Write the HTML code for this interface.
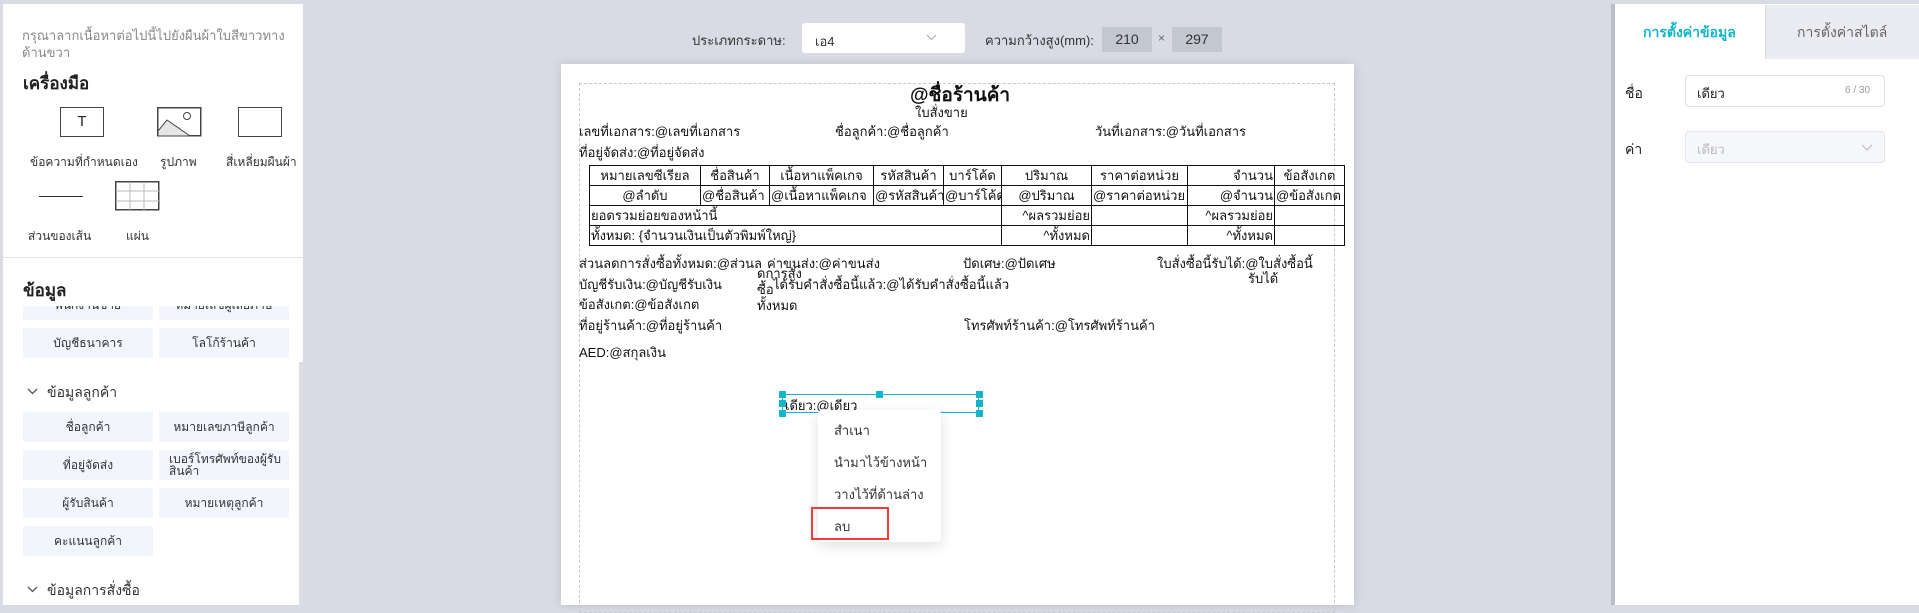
<!DOCTYPE html>
<html><head><meta charset="utf-8"><style>
*{margin:0;padding:0;box-sizing:border-box}
body{width:1919px;height:605px;overflow:hidden;background:#d8dbe3;font-family:"Liberation Sans",sans-serif;position:relative;color:#222}
.a{position:absolute;white-space:nowrap}
#left{position:absolute;left:3px;top:4px;width:300px;height:601px;background:#fff}
.btn{position:absolute;width:130px;height:30px;background:#f2f5fc;font-size:12px;color:#333;display:flex;align-items:center;justify-content:center;text-align:center;line-height:12px}
.tl{font-size:12px;color:#333}
.doc{font-size:13px;color:#111}
table{border-collapse:collapse;position:absolute;left:589px;top:165px;width:755px;font-size:13px;table-layout:fixed}
td{border:1.5px solid #111;height:20px;padding:0 1px;white-space:nowrap;overflow:hidden;line-height:17px}
.h{position:absolute;width:7px;height:7px;background:#13b5c8}
</style></head><body>
<div id="left">
 <div class="a" style="left:19px;top:23px;font-size:13px;color:#888;line-height:17px;white-space:normal;width:285px">กรุณาลากเนื้อหาต่อไปนี้ไปยังผืนผ้าใบสีขาวทางด้านขวา</div>
 <div class="a" style="left:20px;top:66px;font-size:17px;font-weight:bold;color:#222">เครื่องมือ</div>
 <div class="a" style="left:57px;top:103px;width:44px;height:30px;border:1.5px solid #444;font-size:15px;text-align:center;line-height:27px">T</div>
 <svg class="a" style="left:154px;top:103px" width="45" height="30"><rect x="0.75" y="0.75" width="43" height="28" fill="#fff" stroke="#444" stroke-width="1.5"/><path d="M1 24 L10 13 L33 29 L1 29Z" fill="#e6e6e6" stroke="#444" stroke-width="1"/><circle cx="30" cy="9" r="3.5" fill="none" stroke="#444"/></svg>
 <div class="a" style="left:235px;top:103px;width:44px;height:30px;border:1.5px solid #444"></div>
 <div class="a tl" style="left:27px;top:149px">ข้อความที่กำหนดเอง</div>
 <div class="a tl" style="left:157px;top:149px">รูปภาพ</div>
 <div class="a tl" style="left:223px;top:149px">สี่เหลี่ยมผืนผ้า</div>
 <div class="a" style="left:36px;top:192px;width:44px;border-top:1.5px solid #333"></div>
 <svg class="a" style="left:112px;top:177px" width="45" height="30"><rect x="0.75" y="0.75" width="43" height="28" fill="#fff" stroke="#444" stroke-width="1.5"/><path d="M15 1V29M29 1V29M1 10H44M1 20H44" stroke="#bbb"/></svg>
 <div class="a tl" style="left:25px;top:223px">ส่วนของเส้น</div>
 <div class="a tl" style="left:123px;top:223px">แผ่น</div>
 <div class="a" style="left:0;top:253px;width:300px;border-top:1px solid #e2e2e2"></div>
 <div class="a" style="left:20px;top:273px;font-size:17px;font-weight:bold">ข้อมูล</div>
 <div style="position:absolute;left:0;top:302px;width:300px;height:299px;overflow:hidden">
  <div class="btn" style="left:20px;top:-16px">พนักงานขาย</div>
  <div class="btn" style="left:156px;top:-16px">หมายเลขผู้เสียภาษี</div>
  <div class="btn" style="left:20px;top:22px">บัญชีธนาคาร</div>
  <div class="btn" style="left:156px;top:22px">โลโก้ร้านค้า</div>
  <svg class="a" style="left:24px;top:82px" width="11" height="7"><path d="M1 1L5.5 5.5L10 1" fill="none" stroke="#555" stroke-width="1.3"/></svg>
  <div class="a" style="left:44px;top:76px;font-size:14px;color:#333">ข้อมูลลูกค้า</div>
  <div class="btn" style="left:20px;top:106px">ชื่อลูกค้า</div>
  <div class="btn" style="left:156px;top:106px">หมายเลขภาษีลูกค้า</div>
  <div class="btn" style="left:20px;top:144px">ที่อยู่จัดส่ง</div>
  <div class="btn" style="left:156px;top:144px;justify-content:flex-start;padding-left:10px;text-align:left">เบอร์โทรศัพท์ของผู้รับสินค้า</div>
  <div class="btn" style="left:20px;top:182px">ผู้รับสินค้า</div>
  <div class="btn" style="left:156px;top:182px">หมายเหตุลูกค้า</div>
  <div class="btn" style="left:20px;top:220px">คะแนนลูกค้า</div>
  <svg class="a" style="left:24px;top:280px" width="11" height="7"><path d="M1 1L5.5 5.5L10 1" fill="none" stroke="#555" stroke-width="1.3"/></svg>
  <div class="a" style="left:44px;top:274px;font-size:14px;color:#333">ข้อมูลการสั่งซื้อ</div>
  <div class="a" style="left:296px;top:56px;width:4px;height:243px;background:#dcdde2"></div>
 </div>
</div>
<div class="a" style="left:0;top:0;width:1919px;height:4px;background:#d8dbe3"></div>
<!-- toolbar -->
<div class="a" style="left:692px;top:30px;font-size:13px;color:#333">ประเภทกระดาษ:</div>
<div class="a" style="left:802px;top:23px;width:163px;height:30px;background:#fff;border-radius:3px"></div>
<div class="a" style="left:815px;top:31px;font-size:13px;color:#333">เอ4</div>
<svg class="a" style="left:926px;top:34px" width="11" height="7"><path d="M1 1L5.5 5.5L10 1" fill="none" stroke="#aaa" stroke-width="1"/></svg>
<div class="a" style="left:985px;top:30px;font-size:13px;color:#333">ความกว้างสูง(mm):</div>
<div class="a" style="left:1102px;top:27px;width:50px;height:25px;background:#c2c7d0;font-size:14px;text-align:center;line-height:25px;color:#333">210</div>
<div class="a" style="left:1158px;top:31px;font-size:12px;color:#666">×</div>
<div class="a" style="left:1172px;top:27px;width:50px;height:25px;background:#c2c7d0;font-size:14px;text-align:center;line-height:25px;color:#333">297</div>
<!-- page -->
<div class="a" style="left:561px;top:64px;width:793px;height:541px;background:#fff;box-shadow:0 0 10px rgba(0,0,0,.12)"></div>
<div class="a" style="left:579px;top:83px;width:756px;height:530px;border:1px dashed #c8c8c8"></div>
<div class="doc">
<div class="a" style="left:910px;top:80px;font-size:19px;font-weight:bold">@ชื่อร้านค้า</div>
<div class="a" style="left:915px;top:102px">ใบสั่งขาย</div>
<div class="a" style="left:579px;top:121px">เลขที่เอกสาร:@เลขที่เอกสาร</div>
<div class="a" style="left:835px;top:121px">ชื่อลูกค้า:@ชื่อลูกค้า</div>
<div class="a" style="left:1095px;top:121px">วันที่เอกสาร:@วันที่เอกสาร</div>
<div class="a" style="left:579px;top:142px">ที่อยู่จัดส่ง:@ที่อยู่จัดส่ง</div>
<table>
<colgroup><col style="width:111px"><col style="width:69px"><col style="width:104px"><col style="width:70px"><col style="width:58px"><col style="width:90px"><col style="width:96px"><col style="width:87px"><col style="width:70px"></colgroup>
<tr style="text-align:center"><td>หมายเลขซีเรียล</td><td>ชื่อสินค้า</td><td>เนื้อหาแพ็คเกจ</td><td>รหัสสินค้า</td><td>บาร์โค้ด</td><td>ปริมาณ</td><td>ราคาต่อหน่วย</td><td style="text-align:right">จำนวน</td><td>ข้อสังเกต</td></tr>
<tr><td style="text-align:center">@ลำดับ</td><td>@ชื่อสินค้า</td><td>@เนื้อหาแพ็คเกจ</td><td>@รหัสสินค้า</td><td>@บาร์โค้ด</td><td style="text-align:center">@ปริมาณ</td><td>@ราคาต่อหน่วย</td><td style="text-align:right">@จำนวน</td><td>@ข้อสังเกต</td></tr>
<tr><td colspan="5">ยอดรวมย่อยของหน้านี้</td><td style="text-align:right">^ผลรวมย่อย</td><td></td><td style="text-align:right">^ผลรวมย่อย</td><td></td></tr>
<tr><td colspan="5">ทั้งหมด: {จำนวนเงินเป็นตัวพิมพ์ใหญ่}</td><td style="text-align:right">^ทั้งหมด</td><td></td><td style="text-align:right">^ทั้งหมด</td><td></td></tr>
</table>
<div class="a" style="left:579px;top:253px">ส่วนลดการสั่งซื้อทั้งหมด:@ส่วนล</div>
<div class="a" style="left:767px;top:253px">ค่าขนส่ง:@ค่าขนส่ง</div>
<div class="a" style="left:963px;top:253px">ปัดเศษ:@ปัดเศษ</div>
<div class="a" style="left:1157px;top:253px">ใบสั่งซื้อนี้รับได้:@ใบสั่งซื้อนี้</div>
<div class="a" style="left:1248px;top:268px">รับได้</div>
<div class="a" style="left:579px;top:274px">บัญชีรับเงิน:@บัญชีรับเงิน</div>
<div class="a" style="left:757px;top:266px;line-height:16px">ดการสั่ง<br>ซื้อ<br>ทั้งหมด</div>
<div class="a" style="left:773px;top:274px">ได้รับคำสั่งซื้อนี้แล้ว:@ได้รับคำสั่งซื้อนี้แล้ว</div>
<div class="a" style="left:579px;top:294px">ข้อสังเกต:@ข้อสังเกต</div>
<div class="a" style="left:579px;top:315px">ที่อยู่ร้านค้า:@ที่อยู่ร้านค้า</div>
<div class="a" style="left:964px;top:315px">โทรศัพท์ร้านค้า:@โทรศัพท์ร้านค้า</div>
<div class="a" style="left:579px;top:342px">AED:@สกุลเงิน</div>
</div>
<!-- selected -->
<div class="a" style="left:782px;top:394px;width:197px;height:19px;border:1.5px solid #13b5c8"></div>
<div class="h" style="left:779px;top:391px"></div><div class="h" style="left:876px;top:391px"></div><div class="h" style="left:976px;top:391px"></div>
<div class="h" style="left:779px;top:400px"></div><div class="h" style="left:976px;top:400px"></div>
<div class="h" style="left:779px;top:410px"></div><div class="h" style="left:976px;top:410px"></div>
<div class="a doc" style="left:785px;top:395px">เดียว:@เดียว</div>
<!-- context menu -->
<div class="a" style="left:818px;top:410px;width:123px;height:132px;background:#fff;border-radius:4px;box-shadow:0 4px 14px rgba(0,0,0,.12)"></div>
<div class="a" style="left:834px;top:420px;font-size:13px;color:#333">สำเนา</div>
<div class="a" style="left:834px;top:452px;font-size:13px;color:#333">นำมาไว้ข้างหน้า</div>
<div class="a" style="left:834px;top:484px;font-size:13px;color:#333">วางไว้ที่ด้านล่าง</div>
<div class="a" style="left:834px;top:516px;font-size:13px;color:#333">ลบ</div>
<div class="a" style="left:811px;top:507px;width:78px;height:33px;border:2px solid #f23c3c"></div>
<!-- right panel -->
<div class="a" style="left:1611px;top:4px;width:4px;height:601px;background:#b9bec8"></div>
<div class="a" style="left:1615px;top:4px;width:304px;height:601px;background:#fff"></div>
<div class="a" style="left:1765px;top:5px;width:154px;height:54px;background:#ebecf1;border-left:1px solid #d8d8d8"></div>
<div class="a" style="left:1643px;top:22px;font-size:14px;font-weight:bold;color:#13b5c8">การตั้งค่าข้อมูล</div>
<div class="a" style="left:1797px;top:22px;font-size:14px;color:#666">การตั้งค่าสไตล์</div>
<div class="a" style="left:1625px;top:83px;font-size:14px;color:#222">ชื่อ</div>
<div class="a" style="left:1685px;top:75px;width:200px;height:32px;border:1px solid #dcdfe6;border-radius:4px"></div>
<div class="a" style="left:1697px;top:83px;font-size:13px;color:#222">เดียว</div>
<div class="a" style="left:1845px;top:85px;font-size:10px;color:#999">6 / 30</div>
<div class="a" style="left:1625px;top:139px;font-size:14px;color:#222">ค่า</div>
<div class="a" style="left:1685px;top:131px;width:200px;height:32px;border:1px solid #e4e7ed;border-radius:4px;background:#f5f7fa"></div>
<div class="a" style="left:1697px;top:139px;font-size:13px;color:#bbb">เดียว</div>
<svg class="a" style="left:1861px;top:144px" width="12" height="8"><path d="M1 1L6 6L11 1" fill="none" stroke="#bbb" stroke-width="1"/></svg>
</body></html>
